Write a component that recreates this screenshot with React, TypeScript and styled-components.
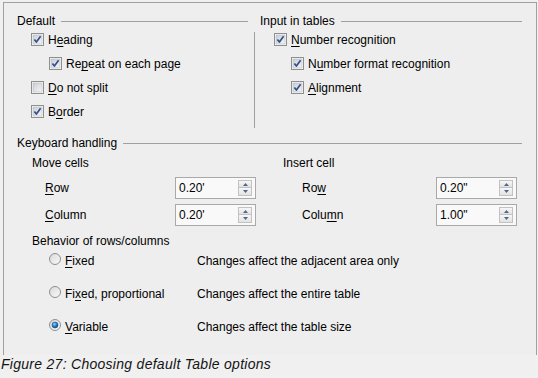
import React from 'react'
import styled, { createGlobalStyle } from 'styled-components'

const GlobalStyle = createGlobalStyle`
  body {
    margin: 0;
    background: #f0f0f0;
    font-family: "Liberation Sans", Arial, sans-serif;
    font-size: 12px;
    color: #000;
  }
`

const Page = styled.div`
  width: 538px;
  height: 378px;
  background: #f0f0f0;
  overflow: hidden;
`

const Panel = styled.div`
  box-sizing: border-box;
  margin: 2px 0 0 3px;
  width: 534px;
  height: 353px;
  border: 1px solid #a0a0a0;
  border-bottom: none;
  background: #eeeeee;
  padding: 11px 14px 0 13px;
`

const TopGrid = styled.div`
  display: grid;
  grid-template-columns: 237px 1px 1fr;
`

const Column = styled.div<{ pad?: number }>`
  padding-left: ${({ pad }) => pad || 0}px;
  padding-bottom: 4px;
`

const VSep = styled.div`
  background: #a0a0a0;
  margin-top: 18px;
`

const SectionHead = styled.div<{ gapRight?: number; top?: number }>`
  display: flex;
  align-items: center;
  height: 14px;
  line-height: 14px;
  margin-top: ${({ top }) => top || 0}px;
  margin-right: ${({ gapRight }) => gapRight || 0}px;
  white-space: nowrap;
  &::after {
    content: '';
    flex: 1;
    height: 1px;
    background: #a0a0a0;
    margin-left: 6px;
  }
`

const CheckRow = styled.div<{ indent: number }>`
  display: flex;
  align-items: center;
  gap: 4px;
  height: 24px;
  padding-left: ${({ indent }) => indent}px;
  white-space: nowrap;
`

const Mn = styled.span`
  text-decoration: underline;
  text-underline-offset: 2px;
`

const BoxSvg = styled.svg`
  flex: none;
  display: block;
  margin-top: -2px;
`

const KeyGrid = styled.div`
  display: grid;
  grid-template-columns: 266px 1fr;
`

const SubGroup = styled.div<{ pad: number }>`
  padding-left: ${({ pad }) => pad}px;
`

const SubHead = styled.div<{ top: number; pad?: number }>`
  height: 14px;
  line-height: 14px;
  margin-top: ${({ top }) => top}px;
  padding-left: ${({ pad }) => pad || 0}px;
  white-space: nowrap;
`

const SpinRow = styled.div<{ indent: number; labelW: number; top: number }>`
  display: grid;
  grid-template-columns: ${({ labelW }) => labelW}px 81px;
  align-items: center;
  height: 22px;
  margin-top: ${({ top }) => top}px;
  padding-left: ${({ indent }) => indent}px;
`

const SpinBox = styled.div`
  box-sizing: border-box;
  display: flex;
  align-items: center;
  width: 81px;
  height: 22px;
  border: 1px solid #a9a9a9;
  background: #f9f9f9;
  padding: 0 3px;
`

const SpinValue = styled.span`
  flex: 1;
`

const SpinButtons = styled.div`
  display: flex;
  flex-direction: column;
`

const SpinBtn = styled.div`
  box-sizing: border-box;
  width: 14px;
  height: 8px;
  border: 1px solid #c2c2c2;
  background: linear-gradient(#f7f7f7, #e2e2e2);
  display: flex;
  align-items: center;
  justify-content: center;
  & + & {
    border-top: none;
  }
`

const RadioList = styled.div`
  display: flex;
  flex-direction: column;
  gap: 9px;
  margin-top: 1px;
`

const RadioRow = styled.div`
  display: grid;
  grid-template-columns: 12px 128px 1fr;
  column-gap: 4px;
  align-items: center;
  height: 24px;
  padding-left: 32px;
  white-space: nowrap;
`

const Caption = styled.div`
  margin-top: 1px;
  padding-left: 1px;
  font-size: 14px;
  line-height: 16px;
  font-style: italic;
  letter-spacing: 0.28px;
  color: #141414;
`

const CheckBox = ({ checked }: { checked?: boolean }) => (
  <BoxSvg width="13" height="13" viewBox="0 0 13 13">
    <defs>
      <linearGradient id="cbfill" x1="0" y1="0" x2="1" y2="1">
        <stop offset="0" stopColor="#c9cdd3" />
        <stop offset="1" stopColor="#f7f7f7" />
      </linearGradient>
    </defs>
    <rect x="0.5" y="0.5" width="12" height="12" fill="#fdfdfd" stroke="#8e8f8f" />
    <rect x="2" y="2" width="9" height="9" fill="url(#cbfill)" stroke="#b3b7bd" strokeWidth="0.6" />
    {checked && (
      <path d="M3.4 6.4 L5.4 9 L9.6 3.2" fill="none" stroke="#34508c" strokeWidth="1.7" strokeLinejoin="round" />
    )}
  </BoxSvg>
)

const Radio = ({ checked }: { checked?: boolean }) => (
  <BoxSvg width="12" height="12" viewBox="0 0 12 12" style={{ marginTop: -4 }}>
    <defs>
      <linearGradient id="rdfill" x1="0" y1="0" x2="1" y2="1">
        <stop offset="0" stopColor="#d6d8db" />
        <stop offset="1" stopColor="#fbfbfb" />
      </linearGradient>
      <radialGradient id="rddot" cx="0.4" cy="0.35" r="0.7">
        <stop offset="0" stopColor="#8fd3ff" />
        <stop offset="0.6" stopColor="#1d74c0" />
        <stop offset="1" stopColor="#0b3d73" />
      </radialGradient>
    </defs>
    <circle cx="6" cy="6" r="5.5" fill="url(#rdfill)" stroke="#8f8f8f" />
    {checked && <circle cx="6" cy="6" r="3" fill="url(#rddot)" stroke="#1a4f86" strokeWidth="0.6" />}
  </BoxSvg>
)

const Arrow = ({ up }: { up?: boolean }) => (
  <svg width="5" height="3" viewBox="0 0 5 3">
    <path d={up ? 'M0 3 L2.5 0 L5 3 Z' : 'M0 0 L2.5 3 L5 0 Z'} fill="#50658c" />
  </svg>
)

const Spin = ({ value }: { value: string }) => (
  <SpinBox>
    <SpinValue>{value}</SpinValue>
    <SpinButtons>
      <SpinBtn><Arrow up /></SpinBtn>
      <SpinBtn><Arrow /></SpinBtn>
    </SpinButtons>
  </SpinBox>
)

const options = [
  { label: <><Mn>F</Mn>ixed</>, desc: 'Changes affect the adjacent area only', checked: false },
  { label: <>Fi<Mn>x</Mn>ed, proportional</>, desc: 'Changes affect the entire table', checked: false },
  { label: <><Mn>V</Mn>ariable</>, desc: 'Changes affect the table size', checked: true },
]

export default function App() {
  return (
    <Page>
      <GlobalStyle />
      <Panel>
        <TopGrid>
          <Column>
            <SectionHead gapRight={6}>Default</SectionHead>
            <CheckRow indent={14}><CheckBox checked /><span>H<Mn>e</Mn>ading</span></CheckRow>
            <CheckRow indent={32}><CheckBox checked /><span>Re<Mn>p</Mn>eat on each page</span></CheckRow>
            <CheckRow indent={14}><CheckBox /><span><Mn>D</Mn>o not split</span></CheckRow>
            <CheckRow indent={14}><CheckBox checked /><span>B<Mn>o</Mn>rder</span></CheckRow>
          </Column>
          <VSep />
          <Column pad={5}>
            <SectionHead>Input in tables</SectionHead>
            <CheckRow indent={14}><CheckBox checked /><span><Mn>N</Mn>umber recognition</span></CheckRow>
            <CheckRow indent={31}><CheckBox checked /><span>N<Mn>u</Mn>mber format recognition</span></CheckRow>
            <CheckRow indent={31}><CheckBox checked /><span><Mn>A</Mn>lignment</span></CheckRow>
          </Column>
        </TopGrid>

        <SectionHead top={8}>Keyboard handling</SectionHead>
        <KeyGrid>
          <SubGroup pad={15}>
            <SubHead top={6}>Move cells</SubHead>
            <SpinRow indent={13} labelW={130} top={7}>
              <span><Mn>R</Mn>ow</span>
              <Spin value="0.20'" />
            </SpinRow>
            <SpinRow indent={13} labelW={130} top={5}>
              <span><Mn>C</Mn>olumn</span>
              <Spin value="0.20'" />
            </SpinRow>
          </SubGroup>
          <SubGroup pad={0}>
            <SubHead top={6}>Insert cell</SubHead>
            <SpinRow indent={19} labelW={134} top={7}>
              <span>Ro<Mn>w</Mn></span>
              <Spin value={'0.20"'} />
            </SpinRow>
            <SpinRow indent={19} labelW={134} top={5}>
              <span>Colu<Mn>m</Mn>n</span>
              <Spin value={'1.00"'} />
            </SpinRow>
          </SubGroup>
        </KeyGrid>

        <SubHead top={8} pad={15}>Behavior of rows/columns</SubHead>
        <RadioList>
          {options.map((o, i) => (
            <RadioRow key={i}>
              <Radio checked={o.checked} />
              <span>{o.label}</span>
              <span>{o.desc}</span>
            </RadioRow>
          ))}
        </RadioList>
      </Panel>
      <Caption>Figure 27: Choosing default Table options</Caption>
    </Page>
  )
}
